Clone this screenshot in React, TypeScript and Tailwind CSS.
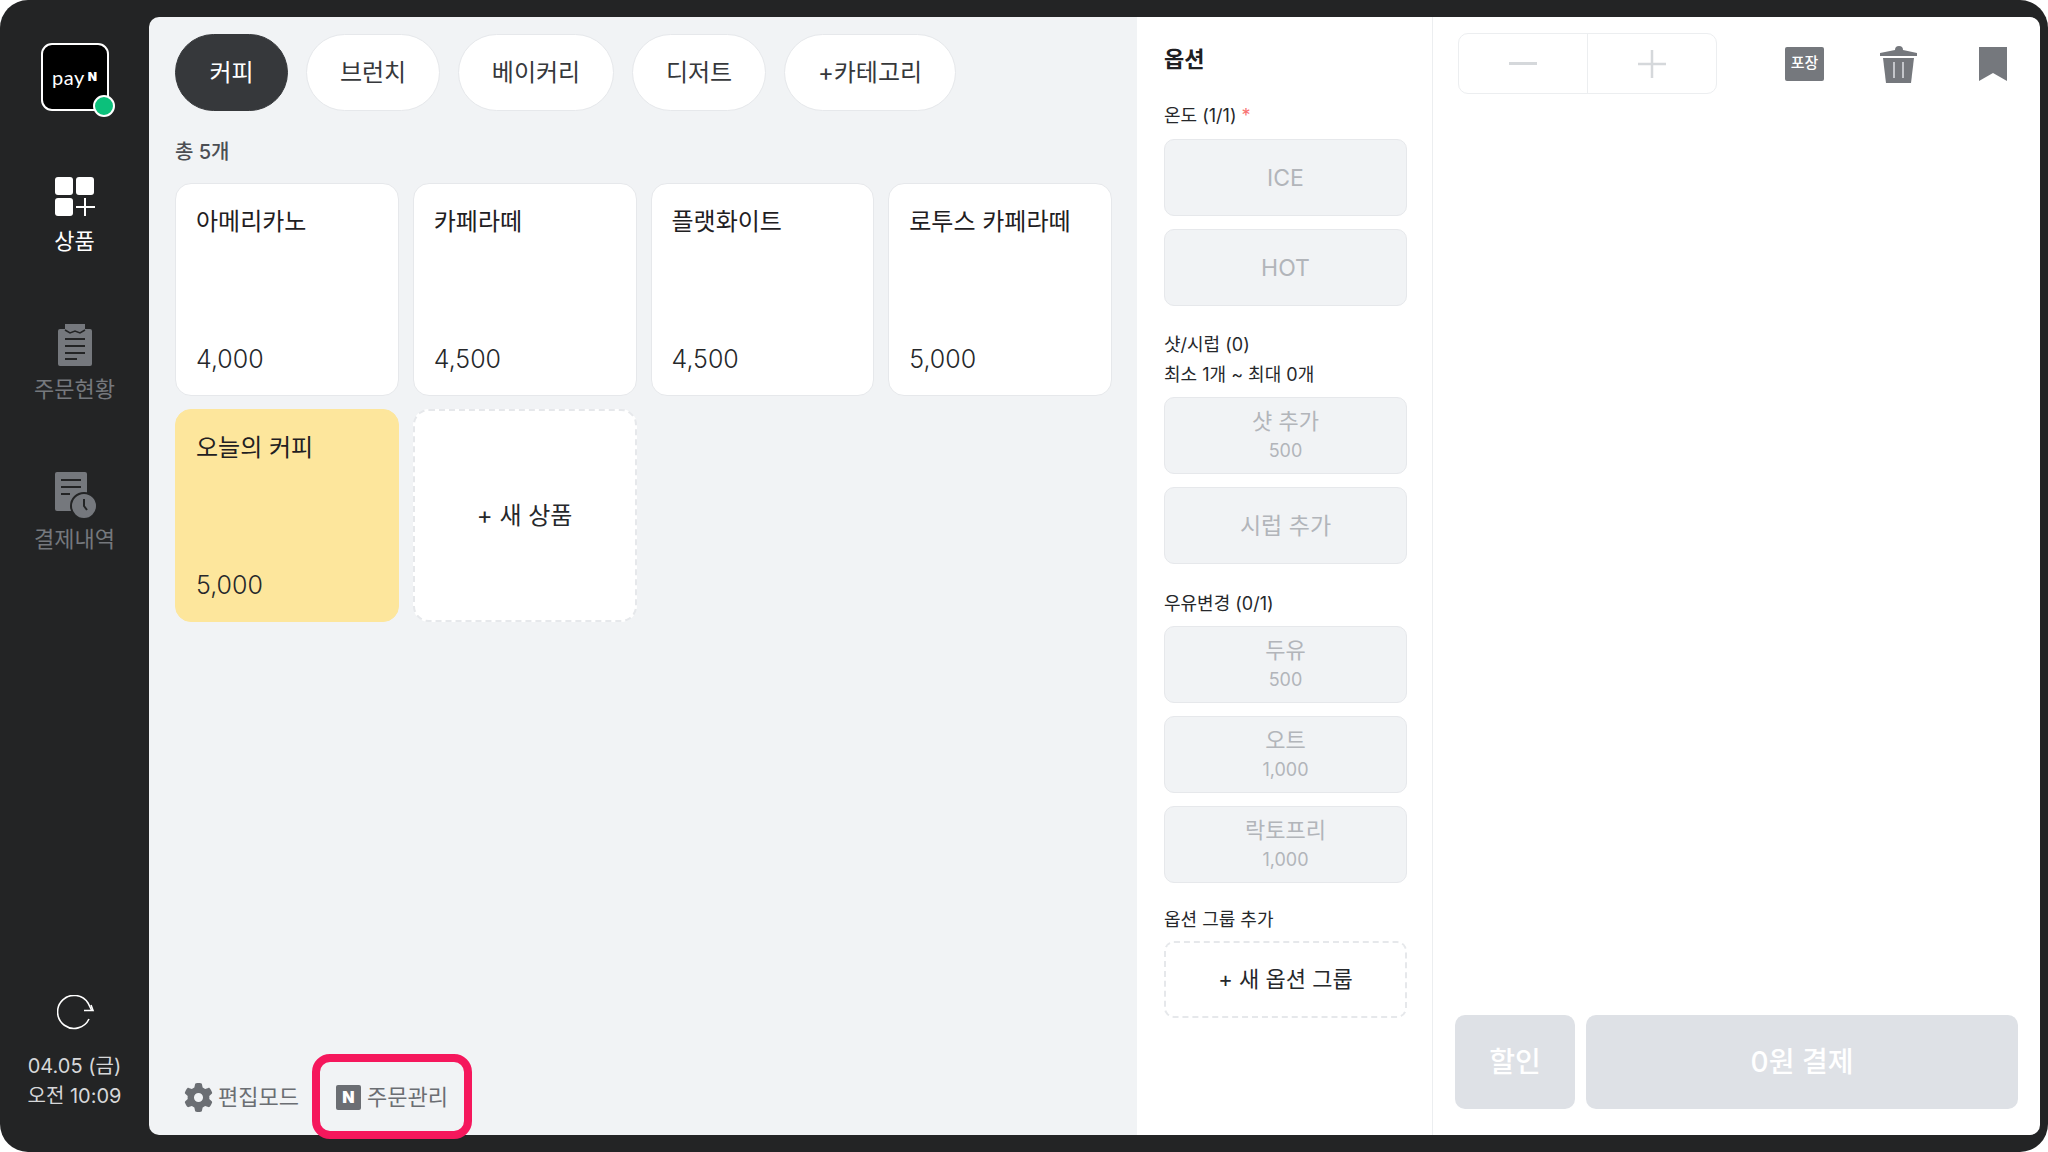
import { FaGear } from "react-icons/fa6";

const FONT = "font-['Inter','Noto_Sans_CJK_KR',sans-serif]";

const TABS = [
  { name: "커피", width: "w-[113px]", active: true },
  { name: "브런치", width: "w-[134px]", active: false },
  { name: "베이커리", width: "w-[156px]", active: false },
  { name: "디저트", width: "w-[134px]", active: false },
  { name: "+카테고리", width: "w-[172px]", active: false },
];

const PRODUCTS = [
  { name: "아메리카노", price: "4,000", yellow: false },
  { name: "카페라떼", price: "4,500", yellow: false },
  { name: "플랫화이트", price: "4,500", yellow: false },
  { name: "로투스 카페라떼", price: "5,000", yellow: false },
  { name: "오늘의 커피", price: "5,000", yellow: true },
];

function GridIcon() {
  return (
    <svg className="ml-[1px]" width="40" height="40" viewBox="0 0 40 40" fill="#fff">
      <rect x="0" y="0" width="18" height="18" rx="3" />
      <rect x="21" y="0" width="18" height="18" rx="3" />
      <rect x="0" y="21" width="18" height="18" rx="3" />
      <path d="M30 21v18M21 30h19" stroke="#fff" strokeWidth="2" fill="none" />
    </svg>
  );
}

function ClipboardIcon() {
  return (
    <svg width="34" height="42" viewBox="0 0 34 42">
      <path d="M0 7a2 2 0 0 1 2-2h5V0h20v5h5a2 2 0 0 1 2 2v33a2 2 0 0 1-2 2H2a2 2 0 0 1-2-2z" fill="#75787d" />
      <path d="M7 6l5 3 5-2 5 2 5-3" stroke="#232425" strokeWidth="1.5" fill="none" />
      <path d="M7 15h20M7 22h20M7 29h20M7 35h12" stroke="#232425" strokeWidth="2" fill="none" />
    </svg>
  );
}

function HistoryIcon() {
  return (
    <svg className="ml-[3px]" width="42" height="48" viewBox="0 0 42 48">
      <rect x="0" y="0" width="32" height="39" rx="2" fill="#75787d" />
      <path d="M6 8h20M6 15h20M6 22h9" stroke="#232425" strokeWidth="2" fill="none" />
      <circle cx="29" cy="34" r="13" fill="#75787d" stroke="#232425" strokeWidth="2" />
      <path d="M29 27v7l3 4" stroke="#232425" strokeWidth="2" fill="none" />
    </svg>
  );
}

function RefreshIcon() {
  return (
    <svg className="ml-[3px]" width="38" height="36" viewBox="0 0 38 36" fill="none" stroke="#fff" strokeWidth="1.6">
      <path d="M32 24A16.5 16.5 0 1 1 31 8l3.5 7" />
      <path d="M27 15.500h9L34 10" />
    </svg>
  );
}

function TrashIcon() {
  return (
    <svg width="38" height="38" viewBox="0 0 38 38">
      <path d="M15 5a4 4 0 0 1 8 0l14 3v3H0V8z" fill="#75787d" />
      <path d="M3 13h31l-3 25H6z" fill="#75787d" />
      <path d="M14 17v16M23 17v16" stroke="#e5e7eb" strokeWidth="1.4" />
    </svg>
  );
}

function OptionButton({ label, price }: { label: string; price?: string }) {
  return (
    <div className="flex h-[77px] flex-col items-center justify-center rounded-[10px] border border-[#e6e8eb] bg-[#f1f3f5] text-[#b2b5ba]">
      <span className={price ? "text-[22px] leading-[30px]" : "text-[23px] leading-[28px]"}>{label}</span>
      {price && <span className="text-[18px] leading-[29px]">{price}</span>}
    </div>
  );
}

export default function App() {
  return (
    <div className={`h-[1152px] w-[2048px] overflow-hidden bg-white ${FONT}`}>
      <div className="flex h-full rounded-[28px] bg-[#232425] py-[17px] pr-[8px]">
        {/* Sidebar */}
        <aside className="flex w-[149px] shrink-0 flex-col items-center">
          <div className="relative mt-[26px] flex h-[68px] w-[68px] items-center justify-center rounded-[11px] border-2 border-white bg-black text-white">
            <span className="font-['Lato',sans-serif] text-[20px] leading-none tracking-[0.5px]">pay</span>
            <span className="ml-[3px] text-[12px] font-black leading-none">N</span>
            <span className="absolute -bottom-[8px] -right-[8px] h-[22px] w-[22px] rounded-full border-2 border-white bg-[#0cc07b]" />
          </div>

          <div className="mt-[66px] flex flex-col items-center text-white">
            <GridIcon />
            <span className="mt-[7px] text-[22px] leading-[34px]">상품</span>
          </div>
          <div className="mt-[66px] flex flex-col items-center text-[#75787d]">
            <ClipboardIcon />
            <span className="mt-[6px] text-[22px] leading-[34px]">주문현황</span>
          </div>
          <div className="mt-[66px] flex flex-col items-center text-[#75787d]">
            <HistoryIcon />
            <span className="mt-[2px] text-[22px] leading-[34px]">결제내역</span>
          </div>

          <div className="mt-auto mb-[24px] flex flex-col items-center">
            <RefreshIcon />
            <div className="mt-[20px] text-center text-[20px] leading-[30px] text-[#d6d7d9]">
              <div>04.05 (금)</div>
              <div>오전 10:09</div>
            </div>
          </div>
        </aside>

        {/* Products */}
        <main className="flex w-[988px] shrink-0 flex-col rounded-l-[10px] bg-[#f1f3f5] pt-[17px] pl-[26px] pr-[25px]">
          <div className="flex gap-[18px]">
            {TABS.map(tab => (
              <div
                key={tab.name}
                className={`flex h-[77px] items-center justify-center rounded-full border text-[24px] ${tab.width} ${
                  tab.active ? "border-[#36383b] bg-[#36383b] text-white" : "border-[#e6e8eb] bg-white text-[#36383b]"
                }`}
              >
                {tab.name}
              </div>
            ))}
          </div>

          <p className="mt-[27px] text-[20px] font-medium leading-[28px] text-[#4b4e53]">총 5개</p>

          <div className="mt-[17px] grid grid-cols-4 gap-x-[14px] gap-y-[13px]">
            {PRODUCTS.map(item => (
              <div
                key={item.name}
                className={`flex h-[213px] flex-col justify-between rounded-[16px] border px-[20px] pt-[20px] pb-[18px] ${
                  item.yellow ? "border-[#fde69c] bg-[#fde69c]" : "border-[#e6e8eb] bg-white"
                }`}
              >
                <span className="text-[24px] leading-[36px] text-[#1f2022]">{item.name}</span>
                <span className="text-[25px] font-light leading-[36px] text-[#26282b]">{item.price}</span>
              </div>
            ))}
            <div className="flex h-[213px] items-center justify-center rounded-[16px] border-2 border-dashed border-[#e6e8eb] bg-white text-[24px] text-[#26282b]">
              + 새 상품
            </div>
          </div>

          <div className="mt-auto mb-[22px] flex items-center gap-[37px] pl-[9px] text-[22px] leading-[32px] text-[#6b6e73]">
            <div className="flex items-center gap-[5px]">
              <FaGear size={29} color="#6b6e73" />
              <span>편집모드</span>
            </div>
            <div className="relative flex items-center gap-[6px]">
              <span className="flex h-[25px] w-[25px] items-center justify-center rounded-[2px] bg-[#6b6e73] text-[16px] font-black leading-none text-white">N</span>
              <span>주문관리</span>
              <div className="absolute -bottom-[26px] -left-[24px] -right-[24px] -top-[27px] rounded-[18px] border-[8px] border-[#f5175c]" />
            </div>
          </div>
        </main>

        {/* Options */}
        <section className="w-[296px] shrink-0 border-r border-[#eceef0] bg-white pl-[27px] pr-[25px] pt-[27px]">
          <h2 className="text-[22px] font-bold leading-[30px] text-[#1f2022]">옵션</h2>

          <p className="mt-[29px] text-[18px] leading-[26px] text-[#26282b]">
            온도 (1/1) <span className="align-top text-[18px] text-[#f87171]">*</span>
          </p>
          <div className="mt-[10px] flex flex-col gap-[13px]">
            <OptionButton label="ICE" />
            <OptionButton label="HOT" />
          </div>

          <p className="mt-[24px] text-[18px] leading-[30px] text-[#26282b]">샷/시럽 (0)</p>
          <p className="text-[18px] leading-[30px] text-[#26282b]">최소 1개 ~ 최대 0개</p>
          <div className="mt-[7px] flex flex-col gap-[13px]">
            <OptionButton label="샷 추가" price="500" />
            <OptionButton label="시럽 추가" />
          </div>

          <p className="mt-[27px] text-[18px] leading-[26px] text-[#26282b]">우유변경 (0/1)</p>
          <div className="mt-[9px] flex flex-col gap-[13px]">
            <OptionButton label="두유" price="500" />
            <OptionButton label="오트" price="1,000" />
            <OptionButton label="락토프리" price="1,000" />
          </div>

          <p className="mt-[24px] text-[18px] leading-[26px] text-[#26282b]">옵션 그룹 추가</p>
          <div className="mt-[8px] flex h-[77px] items-center justify-center rounded-[10px] border-2 border-dashed border-[#e6e8eb] text-[22px] text-[#26282b]">
            + 새 옵션 그룹
          </div>
        </section>

        {/* Cart */}
        <section className="flex flex-1 flex-col rounded-r-[10px] bg-white pt-[16px] pr-[22px] pl-[22px]">
          <div className="flex items-center">
            <div className="ml-[3px] flex h-[61px] w-[259px] rounded-[10px] border border-[#eceef0]">
              <div className="flex flex-1 items-center justify-center border-r border-[#eceef0]">
                <div className="h-[3px] w-[28px] bg-[#d5d8db]" />
              </div>
              <div className="flex flex-1 items-center justify-center">
                <svg width="28" height="28" viewBox="0 0 28 28" stroke="#d5d8db" strokeWidth="2.5">
                  <path d="M14 0v28M0 14h28" />
                </svg>
              </div>
            </div>
            <div className="ml-[68px] flex h-[34px] w-[39px] items-center justify-center rounded-[2px] bg-[#75787d] text-[15px] font-medium text-white">포장</div>
            <div className="ml-[56px]">
              <TrashIcon />
            </div>
            <svg className="ml-[61px]" width="28" height="34" viewBox="0 0 28 34" fill="#75787d">
              <path d="M0 0h28v34L14 26 0 34z" />
            </svg>
          </div>

          <div className="mt-auto mb-[26px] flex gap-[11px] text-[28px] font-medium text-white">
            <div className="flex h-[94px] w-[120px] items-center justify-center rounded-[10px] bg-[#dee1e6]">할인</div>
            <div className="flex h-[94px] flex-1 items-center justify-center rounded-[10px] bg-[#dee1e6]">0원 결제</div>
          </div>
        </section>
      </div>
    </div>
  );
}
